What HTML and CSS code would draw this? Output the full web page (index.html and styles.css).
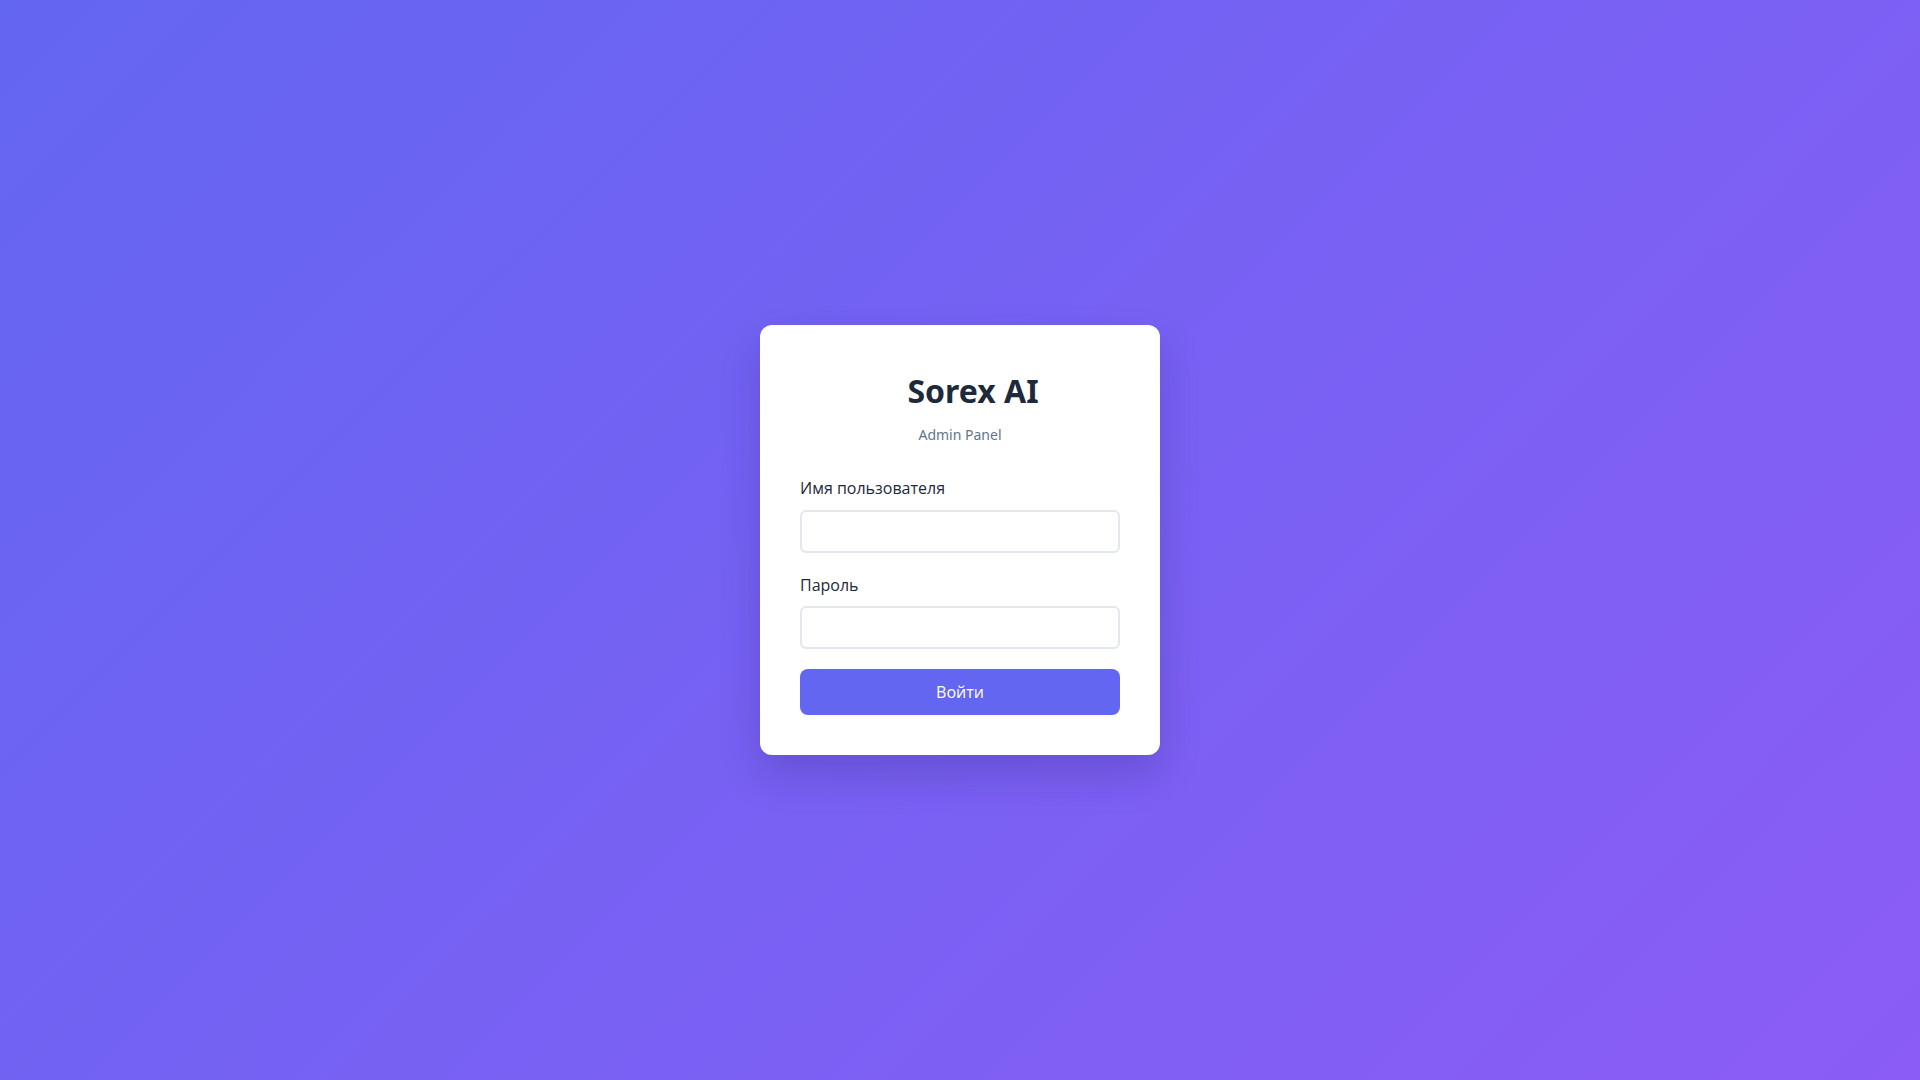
FILE: index.html
```html
<!DOCTYPE html>
<html lang="ru">
<head>
<meta charset="utf-8">
<title>Sorex AI — Admin Panel</title>
<link rel="stylesheet" href="styles.css">
</head>
<body>
<main class="page">
  <form class="card" onsubmit="return false;">
    <div class="head">
      <h1 class="title">Sorex AI</h1>
      <p class="subtitle">Admin Panel</p>
    </div>
    <div class="field">
      <label class="label" for="username">Имя пользователя</label>
      <input class="input" id="username" type="text">
    </div>
    <div class="field">
      <label class="label" for="password">Пароль</label>
      <input class="input" id="password" type="password">
    </div>
    <button class="button" type="submit">Войти</button>
  </form>
</main>
</body>
</html>
```

FILE: styles.css
```css
* { box-sizing: border-box; }
html, body { margin: 0; padding: 0; height: 100%; }
body {
  font-family: "Noto Sans", "Open Sans", sans-serif;
  line-height: 1.6;
  background: linear-gradient(135deg, #6366f1 0%, #8b5cf6 100%);
  color: #1e293b;
}
.page {
  min-height: 100vh;
  display: flex;
  align-items: center;
  justify-content: center;
}
.card {
  width: 400px;
  background: #ffffff;
  border-radius: 12px;
  padding: 40px;
  box-shadow: 0 20px 40px rgba(30, 20, 90, 0.2);
  display: flex;
  flex-direction: column;
}
.head {
  text-align: center;
  margin-bottom: 30px;
}
.title {
  margin: 0 0 8px;
  padding-left: 26px;
  font-size: 32px;
  font-weight: 700;
  color: #1e293b;
  line-height: 1.6;
}
.subtitle {
  margin: 0;
  font-size: 14px;
  color: #64748b;
}
.field {
  display: flex;
  flex-direction: column;
  margin-bottom: 20px;
}
.label {
  font-family: "Open Sans", "Noto Sans", sans-serif;
  font-size: 16px;
  font-weight: 500;
  color: #1e293b;
  margin-bottom: 8px;
}
.input {
  height: 43px;
  border: 2px solid #e2e8f0;
  border-radius: 6px;
  padding: 0 12px;
  font-family: inherit;
  font-size: 16px;
  outline: none;
  background: #fff;
}
.button {
  height: 46px;
  border: none;
  border-radius: 8px;
  background: #6366f1;
  color: #ffffff;
  font-family: "Open Sans", "Noto Sans", sans-serif;
  font-size: 16px;
  font-weight: 500;
  cursor: pointer;
}
```
